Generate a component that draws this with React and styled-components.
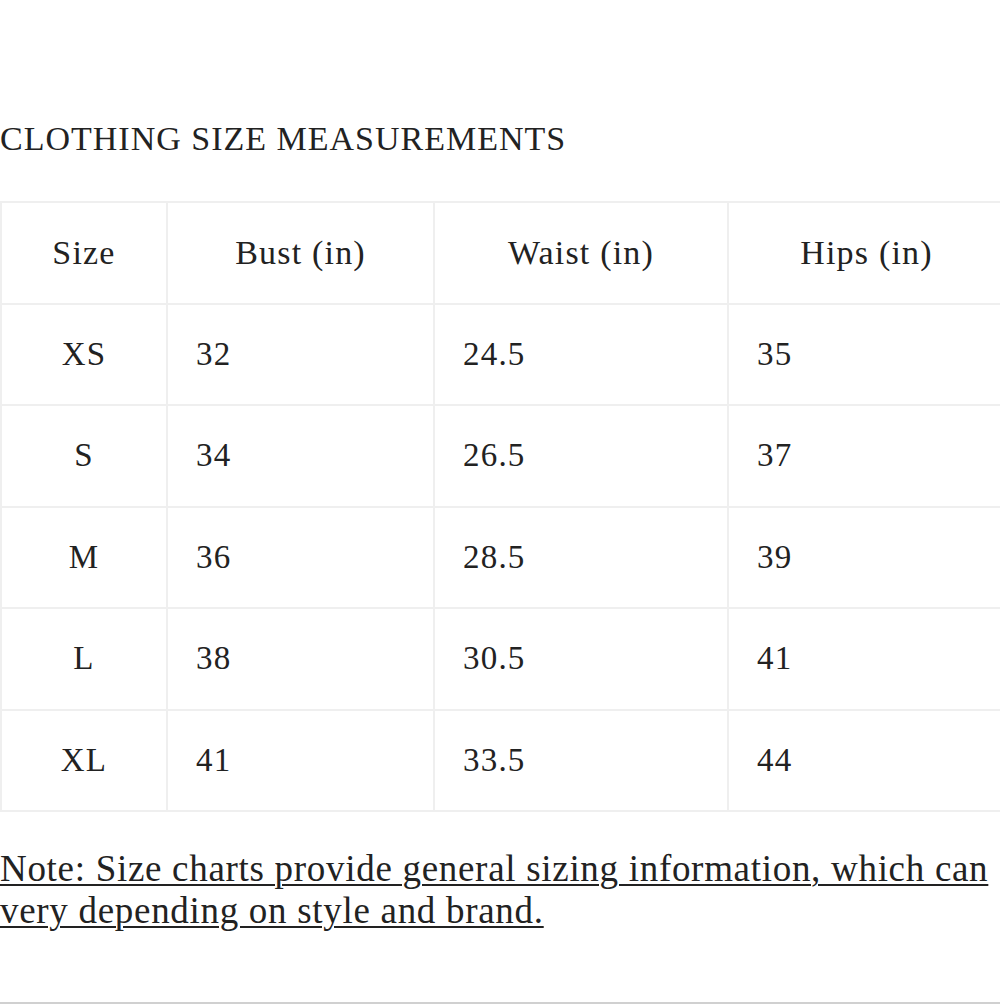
import React from "react";
import styled, { createGlobalStyle } from "styled-components";

const Global = createGlobalStyle`
  html, body { margin: 0; padding: 0; background: #fff; }
  body { font-family: "Liberation Serif", "DejaVu Serif", serif; color: #222; overflow: hidden; }
`;

const Page = styled.div`
  width: 1000px;
  height: 1004px;
  box-sizing: border-box;
  border-bottom: 2px solid #d0d0d0;
  overflow: hidden;
  padding-top: 119px;
`;

const Title = styled.h2`
  margin: 0 0 42px 0;
  font-weight: 400;
  font-size: 34px;
  line-height: 40px;
  letter-spacing: 1px;
  color: #222;
  white-space: nowrap;
`;

const Table = styled.table`
  border-collapse: collapse;
  width: 1004px;
  table-layout: fixed;
`;

const Row = styled.tr`
  height: 101.5px;
`;

const HeadCell = styled.th`
  border: 2px solid #efefef;
  font-weight: 400;
  font-size: 34px;
  letter-spacing: 1.2px;
  text-align: center;
  padding: 0;
  color: #222;
`;

const Cell = styled.td`
  border: 2px solid #efefef;
  font-size: 33px;
  letter-spacing: 1.2px;
  text-align: ${(p) => (p.$center ? "center" : "left")};
  padding: 0 0 0 ${(p) => (p.$center ? 0 : 28)}px;
  color: #222;
`;

const Note = styled.p`
  margin: 36px 0 0 0;
  font-size: 37px;
  line-height: 42px;
  letter-spacing: 0.7px;
  text-decoration: underline;
  text-decoration-thickness: 2px;
  text-underline-offset: 3px;
  color: #222;
`;

const rows = [
  ["XS", "32", "24.5", "35"],
  ["S", "34", "26.5", "37"],
  ["M", "36", "28.5", "39"],
  ["L", "38", "30.5", "41"],
  ["XL", "41", "33.5", "44"],
];

export default function App() {
  return (
    <>
      <Global />
      <Page>
        <Title>CLOTHING SIZE MEASUREMENTS</Title>
        <Table>
          <colgroup>
            <col style={{ width: 166 }} />
            <col style={{ width: 267 }} />
            <col style={{ width: 294 }} />
            <col style={{ width: 277 }} />
          </colgroup>
          <thead>
            <Row>
              <HeadCell>Size</HeadCell>
              <HeadCell>Bust (in)</HeadCell>
              <HeadCell>Waist (in)</HeadCell>
              <HeadCell>Hips (in)</HeadCell>
            </Row>
          </thead>
          <tbody>
            {rows.map((r) => (
              <Row key={r[0]}>
                <Cell $center>{r[0]}</Cell>
                <Cell>{r[1]}</Cell>
                <Cell>{r[2]}</Cell>
                <Cell>{r[3]}</Cell>
              </Row>
            ))}
          </tbody>
        </Table>
        <Note>
          Note: Size charts provide general sizing information, which can very
          depending on style and brand.
        </Note>
      </Page>
    </>
  );
}
